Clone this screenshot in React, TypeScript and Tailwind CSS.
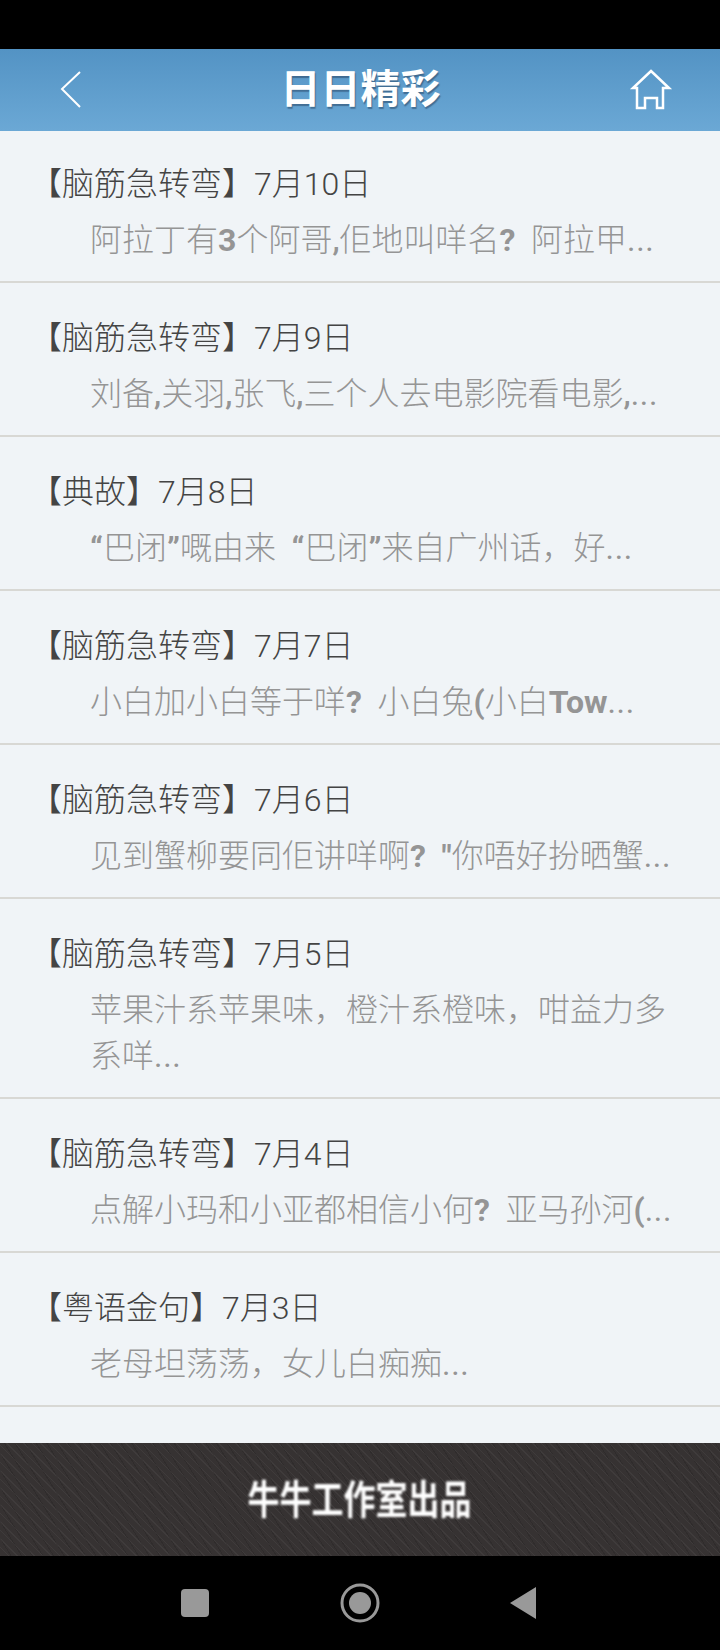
import React from "react";

const font = "font-['Roboto','Noto_Sans_CJK_SC',sans-serif]";

type Row = { tag: string; date: string; lines: React.ReactNode[] };

const B = ({ children }: { children: React.ReactNode }) => <span className="font-bold">{children}</span>;
const C = () => <span className="font-medium">,</span>;
const E = () => <span className="font-normal tracking-[0.7px]">...</span>;

const rows: Row[] = [
  { tag: "【脑筋急转弯】", date: "7月10日", lines: [<>阿拉丁有<B>3</B>个阿哥<C />佢地叫咩名<B>?</B>&nbsp;&nbsp;阿拉甲<E /></>] },
  { tag: "【脑筋急转弯】", date: "7月9日", lines: [<>刘备<C />关羽<C />张飞<C />三个人去电影院看电影<C /><E /></>] },
  { tag: "【典故】", date: "7月8日", lines: [<><B>“</B>巴闭<B>”</B>嘅由来&nbsp;&nbsp;<B>“</B>巴闭<B>”</B>来自广州话，好<E /></>] },
  { tag: "【脑筋急转弯】", date: "7月7日", lines: [<>小白加小白等于咩<B>?</B>&nbsp;&nbsp;小白兔<B>(</B>小白<B>Tow</B><E /></>] },
  { tag: "【脑筋急转弯】", date: "7月6日", lines: [<>见到蟹柳要同佢讲咩啊<B>?</B>&nbsp;&nbsp;<B>"</B>你唔好扮晒蟹<E /></>] },
  { tag: "【脑筋急转弯】", date: "7月5日", lines: [<>苹果汁系苹果味，橙汁系橙味，咁益力多</>, <>系咩<E /></>] },
  { tag: "【脑筋急转弯】", date: "7月4日", lines: [<>点解小玛和小亚都相信小何<B>?</B>&nbsp;&nbsp;亚马孙河<B>(</B><E /></>] },
  { tag: "【粤语金句】", date: "7月3日", lines: [<>老母坦荡荡，女儿白痴痴<E /></>] },
];

export default function App() {
  return (
    <div className={`${font} w-[720px] h-[1650px] bg-black flex flex-col overflow-hidden`}>
      <div className="h-[49px] shrink-0 bg-black" />
      <header className="h-[82px] shrink-0 bg-gradient-to-b from-[#5393c4] to-[#6ba8d5] flex items-center justify-between pl-[60px] pr-[49px]">
        <svg width="22" height="38" viewBox="0 0 22 38" fill="none" stroke="#fff" strokeWidth="2">
          <path d="M20 1 L2 18 L20 36" />
        </svg>
        <h1 className="text-[40px] leading-none font-bold text-white ml-[8px] [text-shadow:1px_2px_1px_rgba(40,70,100,0.55)]">日日精彩</h1>
        <svg width="40" height="40" viewBox="0 0 40 40" fill="none" stroke="#fff" strokeWidth="2.5" strokeLinejoin="miter" overflow="visible">
          <path d="M20 1 L38 18 L32 18 L32 38 L26 38 L26 28 L14 28 L14 38 L6 38 L6 18 L2 18 Z" />
        </svg>
      </header>
      <main className="flex-1 bg-[#f0f4f7]">
        {rows.map((r, i) => (
          <section key={i} className={`border-b-2 border-[#d8d8d4] ${i === 0 ? "pt-[30px]" : "pt-[32px]"} pb-[18px]`}>
            <div className="pl-[30px] text-[32px] leading-[46px] text-[#444444] whitespace-nowrap font-light">
              {r.tag}{r.date}
            </div>
            <div className="mt-[10px] pl-[90px] text-[32px] leading-[46px] text-[#959595] whitespace-nowrap font-light">
              {r.lines.map((l, j) => <div key={j}>{l}</div>)}
            </div>
          </section>
        ))}
      </main>
      <footer className="h-[113px] shrink-0 flex items-center justify-center bg-[#363232] bg-[repeating-linear-gradient(45deg,rgba(255,255,255,0.045)_0px,rgba(255,255,255,0.045)_1px,transparent_1px,transparent_6px),repeating-linear-gradient(58deg,rgba(0,0,0,0.12)_0px,rgba(0,0,0,0.12)_1px,transparent_1px,transparent_9px)]">
        <span className="text-[32px] leading-none font-bold text-white scale-y-125 blur-[0.9px] -ml-[1px]">牛牛工作室出品</span>
      </footer>
      <nav className="h-[94px] shrink-0 bg-black relative flex items-center">
        <div className="ml-[181px] w-[28px] h-[28px] rounded-[4px] bg-[#999999]" />
        <svg className="ml-[131px]" width="40" height="40" viewBox="0 0 40 40">
          <circle cx="20" cy="20" r="18" fill="none" stroke="#999" strokeWidth="3" />
          <circle cx="20" cy="20" r="11" fill="#999" />
        </svg>
        <svg className="ml-[130px]" width="26" height="32" viewBox="0 0 26 32">
          <path d="M26 0 L26 32 L0 16 Z" fill="#999" />
        </svg>
      </nav>
    </div>
  );
}
